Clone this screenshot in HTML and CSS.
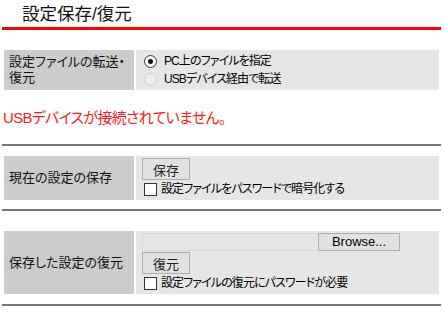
FILE: index.html
```html
<!DOCTYPE html>
<html lang="ja">

<head>
    <meta charset="UTF-8" />
    <meta name="viewport" content="width=device-width, initial-scale=1.0" />
    <title>設定保存/復元</title>
    <link rel="stylesheet" href="styles.css">
</head>

<body>
    <h1 class="page-title">設定保存/復元</h1>

    <table class="setting first">
        <tr>
            <th>設定ファイルの転送・復元</th>
            <td>
                <label class="opt"><input type="radio" name="mode" checked />PC上のファイルを指定</label>
                <label class="opt disabled"><input type="radio" name="mode" disabled />USBデバイス経由で転送</label>
            </td>
        </tr>
    </table>

    <p class="error">USBデバイスが接続されていません。</p>

    <hr />

    <table class="setting">
        <tr>
            <th>現在の設定の保存</th>
            <td>
                <button class="btn">保存</button>
                <label class="opt"><input type="checkbox" />設定ファイルをパスワードで暗号化する</label>
            </td>
        </tr>
    </table>

    <hr class="short" />

    <table class="setting restore">
        <tr>
            <th>保存した設定の復元</th>
            <td>
                <div class="file-input">
                    <span class="file-name"></span>
                    <span class="file-browse">Browse...</span>
                </div>
                <button class="btn">復元</button>
                <label class="opt"><input type="checkbox" />設定ファイルの復元にパスワードが必要</label>
            </td>
        </tr>
    </table>

    <hr class="short last" />
</body>

</html>
```

FILE: styles.css
```css
html,
body {
    margin: 0;
    padding: 0;
}

body {
    background-color: white;
    color: #000;
    font-family: "Liberation Sans", "Noto Sans CJK JP", sans-serif;
    font-feature-settings: "palt";
    font-size: 13px;
}

.page-title {
    margin: 0 3px 0 2px;
    padding: 4px 0 0 20px;
    height: 23px;
    font-size: 17.5px;
    font-weight: normal;
    line-height: 20px;
    color: #111;
    border-bottom: 3px solid #ff0000;
}

table.setting {
    width: 439px;
    margin: 8px 0 0 2px;
    border-spacing: 2px;
}

table.setting.first {
    margin-top: 18px;
}

table.setting.restore {
    margin-top: 18px;
}

table.setting th {
    width: 120px;
    padding: 4px 5px;
    background-color: #cccccc;
    font-weight: normal;
    text-align: left;
    line-height: 16px;
    color: #111;
}

table.setting td {
    padding: 2px 6px;
    background-color: #e6e6e6;
    line-height: 16px;
}

.restore td {
    padding-bottom: 3px;
}

.opt {
    display: flex;
    align-items: center;
    height: 18px;
    font-size: 12px;
    letter-spacing: -0.9px;
}

.opt input {
    appearance: none;
    flex-shrink: 0;
    box-sizing: border-box;
    width: 13px;
    height: 13px;
    margin: 0 7px 0 2px;
    background-color: white;
    border: 1px solid #333;
}

.opt input[type="radio"] {
    border-radius: 50%;
    position: relative;
}

.opt input[type="radio"]:checked::after {
    content: "";
    position: absolute;
    left: 3px;
    top: 3px;
    width: 5px;
    height: 5px;
    border-radius: 50%;
    background-color: #111;
}

.opt input[type="radio"]:disabled {
    border-color: #cfcfcf;
    background-color: #eeeeee;
}

.opt input[type="checkbox"] {
    margin: 0 4px 0 2px;
}

.btn {
    display: block;
    box-sizing: border-box;
    height: 22px;
    width: 48px;
    margin: 0;
    padding: 0;
    border: 1px solid #adadad;
    background-color: #e1e1e1;
    font-family: inherit;
    font-feature-settings: "palt";
    font-size: 13px;
    color: #222;
}

.file-input {
    display: flex;
    height: 18px;
    margin-bottom: 1px;
}

.file-name {
    box-sizing: border-box;
    width: 176px;
    border: 1px solid #d9d9d9;
    border-right: none;
}

.file-browse {
    box-sizing: border-box;
    width: 82px;
    border: 1px solid #adadad;
    background-color: #e1e1e1;
    text-align: center;
    line-height: 16px;
    font-size: 13px;
}

.error {
    margin: 17px 0 0 3px;
    font-size: 15px;
    line-height: 18px;
    letter-spacing: -0.7px;
    color: #ff1a1a;
}

hr {
    margin: 17px 3px 0 2px;
    border: none;
    border-top: 2px solid #777;
}

hr.short {
    margin-top: 7px;
}

hr.last {
    margin-top: 8px;
}
```
